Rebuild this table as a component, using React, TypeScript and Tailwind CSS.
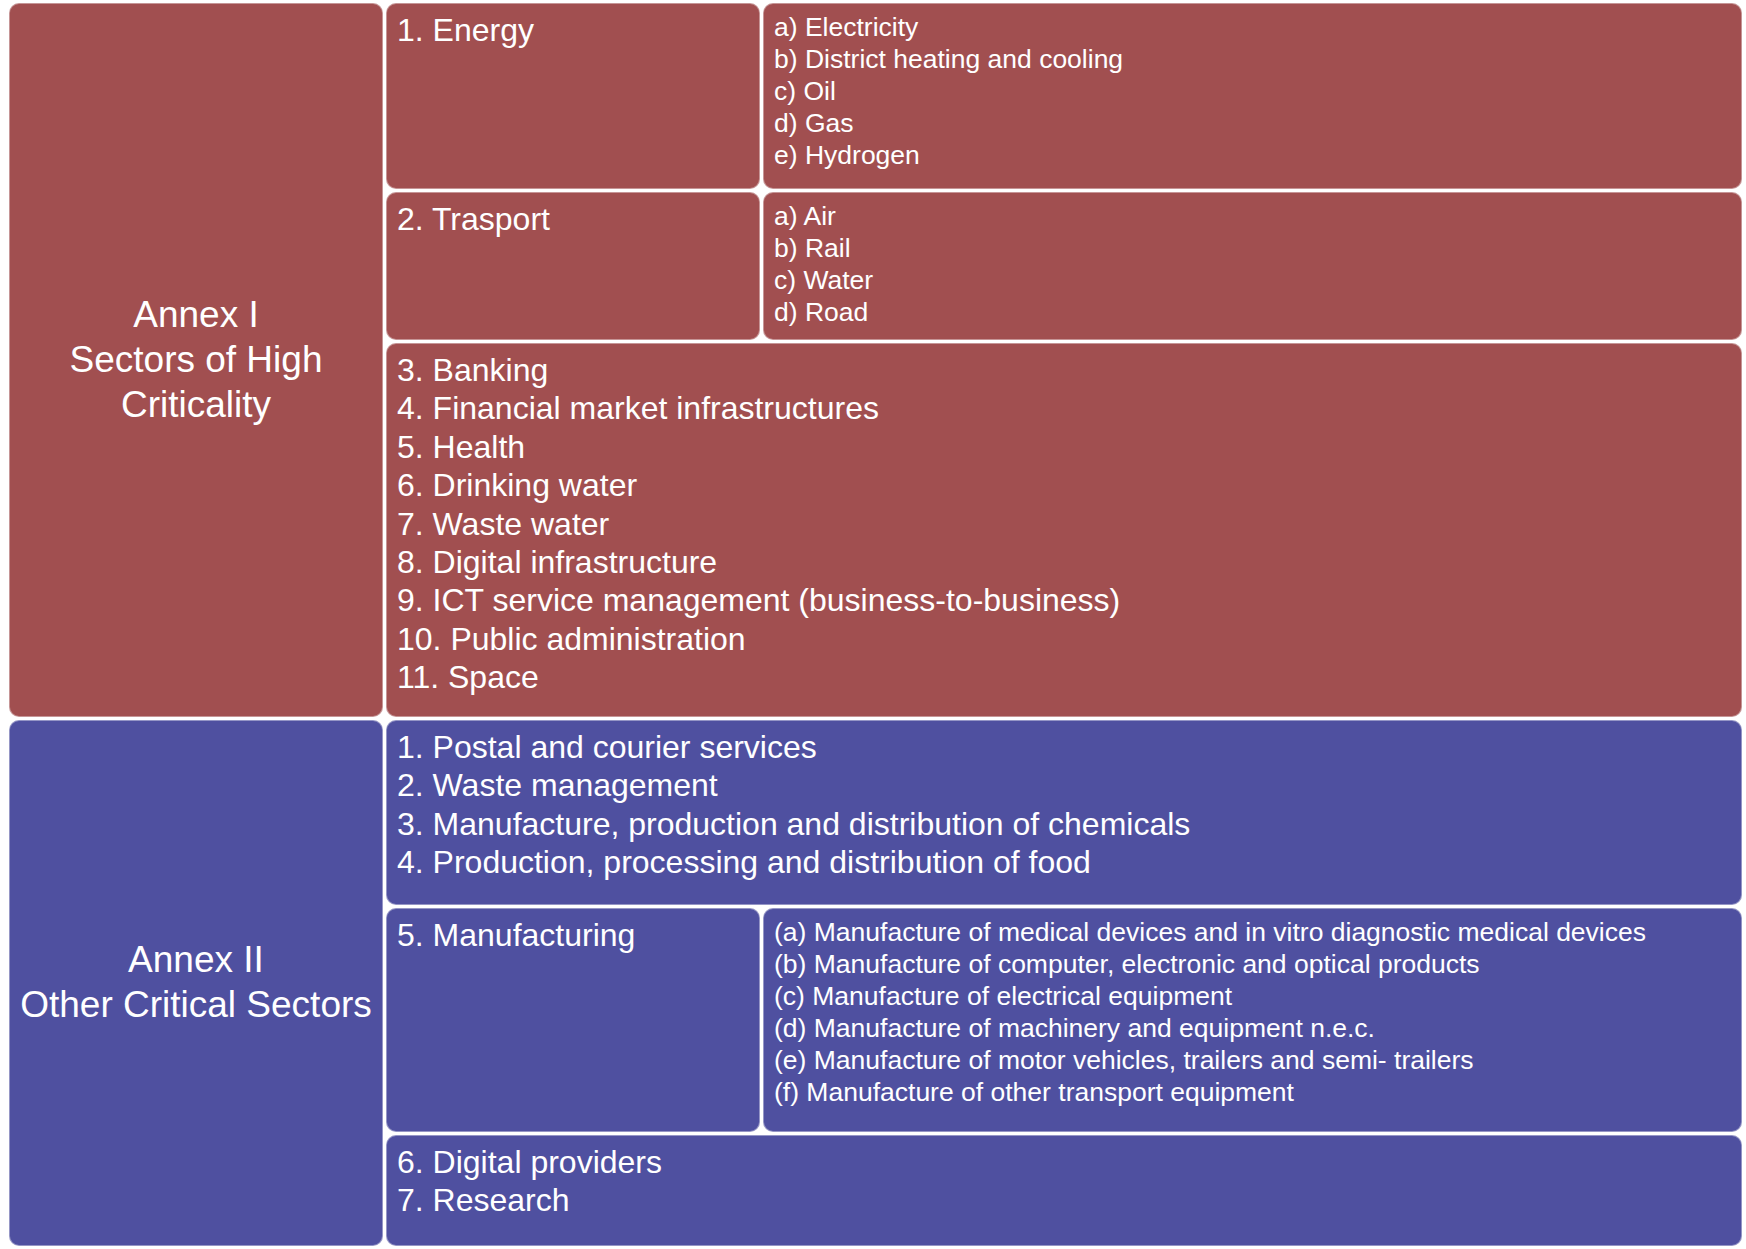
import React from "react";

const red = "bg-[#A14F50]";
const blue = "bg-[#4F50A0]";

function Box({
  color,
  className = "",
  children,
}: {
  color: string;
  className?: string;
  children?: React.ReactNode;
}) {
  return (
    <div
      className={`${color} rounded-[10px] border border-white/40 pl-[10px] pr-2 pt-[7px] text-white ${className}`}
    >
      {children}
    </div>
  );
}

function Main({ items }: { items: string[] }) {
  return (
    <div className="text-[32px] leading-[38.4px] whitespace-nowrap">
      {items.map((t) => (
        <div key={t}>{t}</div>
      ))}
    </div>
  );
}

function Sub({ items }: { items: string[] }) {
  return (
    <div className="text-[26.5px] leading-[32px] whitespace-nowrap">
      {items.map((t) => (
        <div key={t}>{t}</div>
      ))}
    </div>
  );
}

export default function App() {
  return (
    <div
      className="w-[1746px] h-[1249px] bg-white pl-[9px] pr-[4px] pt-[3px] pb-[3px] flex flex-col gap-[3px]"
      style={{ fontFamily: '"Liberation Sans", Arial, sans-serif' }}
    >
      {/* Annex I */}
      <div className="flex gap-[3px] h-[714px]">
        <div
          className={`${red} w-[374px] shrink-0 rounded-[10px] border border-white/40 flex items-center justify-center text-center text-white text-[37px] leading-[45px] px-2 pb-[2px]`}
        >
          <div>
            Annex I
            <br />
            Sectors of High Criticality
          </div>
        </div>
        <div className="flex-1 flex flex-col gap-[3px] min-w-0">
          <div className="flex gap-[3px] h-[186px]">
            <Box color={red} className="w-[374px] shrink-0">
              <Main items={["1. Energy"]} />
            </Box>
            <Box color={red} className="flex-1">
              <Sub
                items={[
                  "a) Electricity",
                  "b) District heating and cooling",
                  "c) Oil",
                  "d) Gas",
                  "e) Hydrogen",
                ]}
              />
            </Box>
          </div>
          <div className="flex gap-[3px] h-[148px]">
            <Box color={red} className="w-[374px] shrink-0">
              <Main items={["2. Trasport"]} />
            </Box>
            <Box color={red} className="flex-1">
              <Sub items={["a) Air", "b) Rail", "c) Water", "d) Road"]} />
            </Box>
          </div>
          <Box color={red} className="flex-1">
            <Main
              items={[
                "3. Banking",
                "4. Financial market infrastructures",
                "5. Health",
                "6. Drinking water",
                "7. Waste water",
                "8. Digital infrastructure",
                "9. ICT service management (business-to-business)",
                "10. Public administration",
                "11. Space",
              ]}
            />
          </Box>
        </div>
      </div>

      {/* Annex II */}
      <div className="flex gap-[3px] flex-1">
        <div
          className={`${blue} w-[374px] shrink-0 rounded-[10px] border border-white/40 flex items-center justify-center text-center text-white text-[37px] leading-[45px] px-1 pb-[2px]`}
        >
          <div>
            Annex II
            <br />
            Other Critical Sectors
          </div>
        </div>
        <div className="flex-1 flex flex-col gap-[3px] min-w-0">
          <Box color={blue} className="h-[185px]">
            <Main
              items={[
                "1. Postal and courier services",
                "2. Waste management",
                "3. Manufacture, production and distribution of chemicals",
                "4. Production, processing and distribution of food",
              ]}
            />
          </Box>
          <div className="flex gap-[3px] h-[224px]">
            <Box color={blue} className="w-[374px] shrink-0">
              <Main items={["5. Manufacturing"]} />
            </Box>
            <Box color={blue} className="flex-1">
              <Sub
                items={[
                  "(a) Manufacture of medical devices and in vitro diagnostic medical devices",
                  "(b) Manufacture of computer, electronic and optical products",
                  "(c) Manufacture of electrical equipment",
                  "(d) Manufacture of machinery and equipment n.e.c.",
                  "(e) Manufacture of motor vehicles, trailers and semi- trailers",
                  "(f) Manufacture of other transport equipment",
                ]}
              />
            </Box>
          </div>
          <Box color={blue} className="flex-1">
            <Main items={["6. Digital providers", "7. Research"]} />
          </Box>
        </div>
      </div>
    </div>
  );
}
